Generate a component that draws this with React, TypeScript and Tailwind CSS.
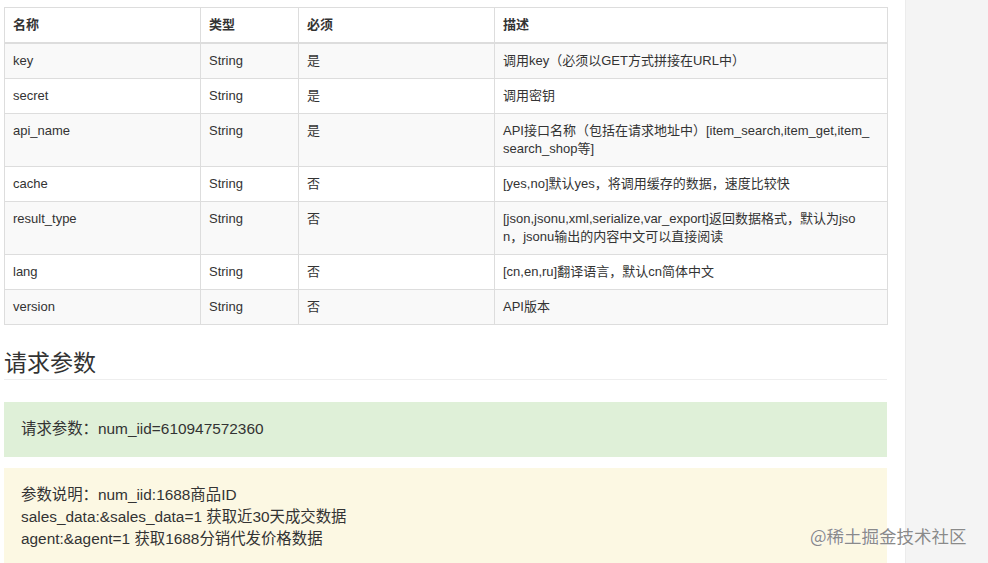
import React from "react";

type Row = { name: string; type: string; req: string; desc: React.ReactNode };

const rows: Row[] = [
  { name: "key", type: "String", req: "是", desc: "调用key（必须以GET方式拼接在URL中）" },
  { name: "secret", type: "String", req: "是", desc: "调用密钥" },
  {
    name: "api_name",
    type: "String",
    req: "是",
    desc: (
      <>
        API接口名称（包括在请求地址中）[item_search,item_get,item_
        <br />
        search_shop等]
      </>
    ),
  },
  { name: "cache", type: "String", req: "否", desc: "[yes,no]默认yes，将调用缓存的数据，速度比较快" },
  {
    name: "result_type",
    type: "String",
    req: "否",
    desc: (
      <>
        [json,jsonu,xml,serialize,var_export]返回数据格式，默认为jso
        <br />
        n，jsonu输出的内容中文可以直接阅读
      </>
    ),
  },
  { name: "lang", type: "String", req: "否", desc: "[cn,en,ru]翻译语言，默认cn简体中文" },
  { name: "version", type: "String", req: "否", desc: "API版本" },
];

const font = { fontFamily: '"Liberation Sans", Arial, "Noto Sans CJK SC", sans-serif' };

export default function App() {
  return (
    <div
      className="relative flex h-[563px] w-[988px] overflow-hidden bg-white text-[#333]"
      style={font}
    >
      <div className="w-[905px] shrink-0 pl-[4px] pt-[7px]">
        <div className="w-[883px]">
          <table className="w-[883px] table-fixed border-collapse text-[13px] leading-[18px]">
            <colgroup>
              <col className="w-[196px]" />
              <col className="w-[98px]" />
              <col className="w-[196px]" />
              <col className="w-[393px]" />
            </colgroup>
            <thead>
              <tr className="bg-white">
                {["名称", "类型", "必须", "描述"].map((h) => (
                  <th
                    key={h}
                    className="border border-b-2 border-[#ddd] px-[8px] py-[8px] text-left align-top font-bold"
                  >
                    {h}
                  </th>
                ))}
              </tr>
            </thead>
            <tbody>
              {rows.map((r, i) => (
                <tr key={r.name} className={i % 2 === 0 ? "bg-[#f9f9f9]" : "bg-white"}>
                  <td className="border border-[#ddd] px-[8px] py-[8px] align-top">{r.name}</td>
                  <td className="border border-[#ddd] px-[8px] py-[8px] align-top">{r.type}</td>
                  <td className="border border-[#ddd] px-[8px] py-[8px] align-top">{r.req}</td>
                  <td className="border border-[#ddd] px-[8px] py-[8px] align-top">{r.desc}</td>
                </tr>
              ))}
            </tbody>
          </table>

          <h2 className="mt-[26px] border-b border-[#eee] pb-[3px] text-[23px] font-normal leading-[25px] text-[#333]">
            请求参数
          </h2>

          <div className="mt-[22px] bg-[#dff0d8] px-[17px] pt-[16px] pb-[17px] text-[15.4px] leading-[22px] text-[#333]">
            请求参数：num_iid=610947572360
          </div>

          <div className="mt-[11px] bg-[#fcf8e3] px-[17px] pt-[16px] pb-[20px] text-[15.4px] leading-[22px] text-[#333]">
            <div>参数说明：num_iid:1688商品ID</div>
            <div>sales_data:&amp;sales_data=1 获取近30天成交数据</div>
            <div>agent:&amp;agent=1 获取1688分销代发价格数据</div>
          </div>
        </div>
      </div>
      <div className="flex-1 border-l border-[#ececec] bg-[#f4f4f4]" />

      <div
        className="absolute left-[810px] top-[524px] text-[17.5px] leading-[24px] text-[#8a8a8a]"
        style={{ fontFamily: '"Noto Sans CJK SC", sans-serif', textShadow: "0 0 1px #fff, 0 0 1px #fff" }}
      >
        @稀土掘金技术社区
      </div>
    </div>
  );
}
